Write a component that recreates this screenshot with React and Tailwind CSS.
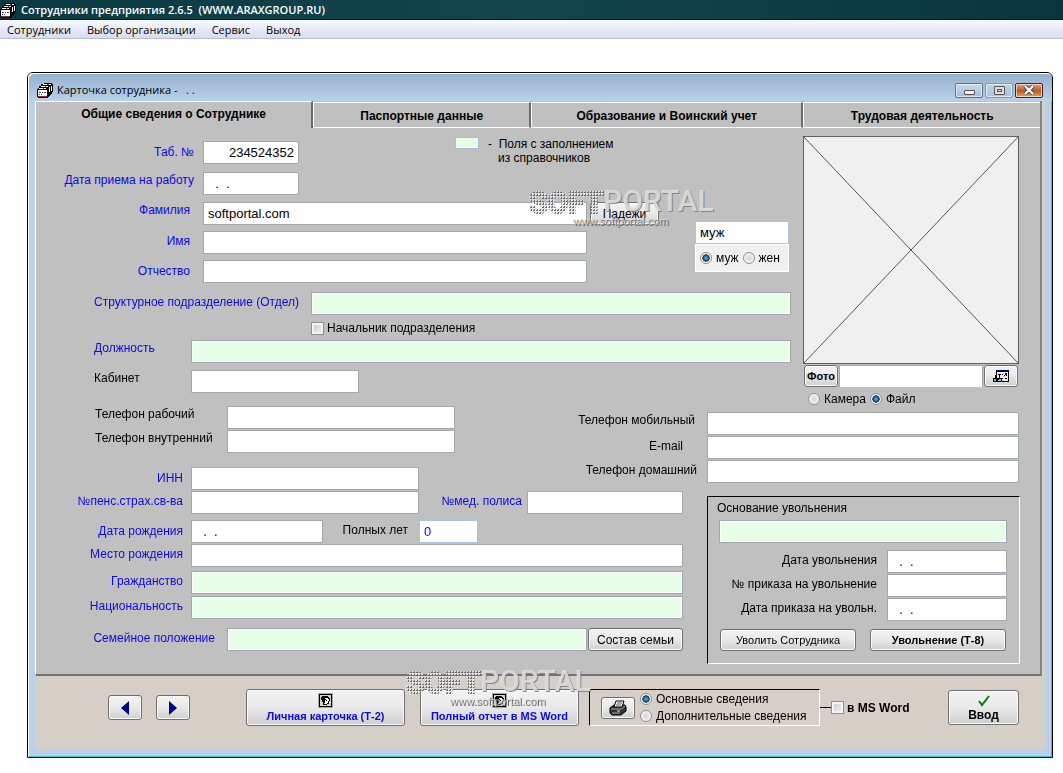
import React from "react";

const inputBase =
  "h-[23px] min-w-0 border px-1 text-[13px] outline-none";
const plain = inputBase + " border-[#a5a7af] bg-white text-black";
const lookup = inputBase + " border-[#a5a7af] bg-[#e6ffe6] text-black shadow-[inset_0_0_0_1px_white]";
const blueEdge = inputBase + " border-[#a9c3e3] bg-white";

const labelBase = "shrink-0 whitespace-nowrap text-[12px]";
const blue = "text-[#0a0ae6]";

const buttonBase =
  "shrink-0 whitespace-nowrap rounded-[3px] border border-[#707070] bg-linear-to-b from-[#f3f3f3] from-0% via-[#e9e9e9] via-50% to-[#cfcfcf] text-black shadow-[inset_0_0_0_1px_#fafafa]";

const radioClass =
  "m-0 size-3 shrink-0 appearance-none rounded-full border border-[#8e8f8f] bg-[radial-gradient(circle,#d4d4d4_0%,#f4f4f4_70%)] checked:bg-[radial-gradient(circle,#5fc0ee_0%,#14507f_38%,#0e3350_48%,#f4f4f4_56%)]";

const checkClass =
  "m-0 size-[13px] shrink-0 appearance-none border border-[#8e8f8f] bg-linear-to-br from-[#c4c8cc] to-[#f6f6f6] shadow-[inset_0_0_0_2px_#f4f4f4] checked:bg-[#14507f]";

function Label({ id, className, children }) {
  return (
    <label htmlFor={id} className={`${labelBase} ${className}`}>
      {children}
    </label>
  );
}

function Field({ id, label, labelClass, inputClass, value, className = "", autoFocus }) {
  return (
    <div className={`flex items-start ${className}`}>
      <Label id={id} className={labelClass}>
        {label}
      </Label>
      <input id={id} defaultValue={value} className={inputClass} autoFocus={autoFocus} />
    </div>
  );
}

function CardsIcon() {
  return (
    <svg viewBox="0 0 16 15" className="h-[15px] w-4 shrink-0" shapeRendering="crispEdges" aria-hidden="true">
      <path d="M7 0h8v1h1v8h-1v2h-1v1h-1v1h-1v1h-1v1H1v-1H0V6h1V5h1V3h2V1h3z" fill="#000" />
      <path d="M6 1h8v1H6zM4 3h7v1H4zM2 5h7v1H2zM1 7h9v6H1z" fill="#fff" />
      <path d="M14 3h1v5h-1zM12 4h1v5h-1zM11 8h0v4h0z" fill="#fff" />
      <path d="M2 9h2v1H2zM5 9h1v1H5zM7 9h2v1H7zM2 11h1v1H2zM4 11h1v1H4z" fill="#444" />
      <path d="M1 13h9v1H1zM10 1h2v1h-2zM8 3h1v1H8zM6 5h1v1H6z" fill="#9b2b22" />
    </svg>
  );
}

function ProfileIcon() {
  return (
    <svg viewBox="0 0 15 15" className="size-[15px]" shapeRendering="crispEdges" aria-hidden="true">
      <path d="M0 0h15v15H0z" fill="#a8a8a8" />
      <path d="M1 1h13v13H1z" fill="#000" />
      <path d="M2 2h11v11H2z" fill="#d4d4d4" />
      <path d="M4 3h6v1h1v2H9v1H7v3H6v2H5V9H4V7H3V4h1z" fill="#000" />
      <path d="M11 5h1v3h-1v3H9v1H6v-1h3v-1h1V8h1z" fill="#000" />
      <path d="M7 5h3v1h1v2h-1v2H8v1H7V7h1z" fill="#fff" />
      <path d="M8 7h1v1H8z" fill="#000" />
    </svg>
  );
}

function PrinterIcon() {
  return (
    <svg viewBox="0 0 18 16" className="h-4 w-[18px]" aria-hidden="true">
      <path d="M1 8 5 5h11l1 2v4l-5 4H3l-2-2z" fill="#333" stroke="#000" />
      <path d="m7 1 8 0-2 6H5z" fill="#fff" stroke="#000" />
      <path d="M8 3h5M7 5h5" stroke="#555" />
      <path d="M2 9h10M12 9l4-3M3 13h8" stroke="#aaa" />
      <path d="M8 11h3" stroke="#ddd" />
    </svg>
  );
}

function BrowseIcon() {
  return (
    <svg viewBox="0 0 16 12" className="h-3 w-4" shapeRendering="crispEdges" aria-hidden="true">
      <path d="M3 0h13v12H3z" fill="#000" />
      <path d="M3 0h13v2H3z" fill="#00007b" />
      <path d="M4 2h11v9H4z" fill="#e8e8e8" />
      <path d="M5 4h3v1H5zM9 4h1v1H9zM12 3h2v3h-1V5h-1v1h-1V5h1zM9 8h1v1H9zM12 8h2v1h-2z" fill="#000" />
      <path d="M2 5h1v1h1v2h2V5h1v3h2v4H6v-2H5v2H0V8h2z" fill="#000" />
      <path d="M1 9h2v2H1zM6 9h2v2H6z" fill="#39d6e0" />
    </svg>
  );
}

function Watermark({ className }) {
  const id = React.useId();
  return (
    <svg viewBox="0 0 190 42" className={`pointer-events-none absolute h-[42px] w-[190px] ${className}`} aria-hidden="true">
      <defs>
        <pattern id={id} width="3" height="3" patternUnits="userSpaceOnUse">
          <rect width="2" height="2" fill="#e4e4e4" />
          <path d="M2 1h1v2H1V2h1z" fill="#6a6a6a" />
        </pattern>
      </defs>
      <g fontFamily="Roboto, sans-serif">
        <text x="0" y="26" fontSize="30" fontWeight="700" fill={`url(#${id})`} stroke={`url(#${id})`} strokeWidth="2">SOFT</text>
        <text x="75" y="25" fontSize="30" fontWeight="500" fill="#777" opacity=".8">PORTAL</text>
        <text x="74" y="24" fontSize="30" fontWeight="500" fill="#dedede" opacity=".9">PORTAL</text>
      </g>
      <g fontFamily="Liberation Sans, sans-serif" fontSize="11">
        <text x="45" y="39" fill="#666">www.softportal.com</text>
        <text x="44" y="38" fill="#d8d8d8" opacity=".7">www.softportal.com</text>
      </g>
    </svg>
  );
}

function WindowButton({ label, className, children }) {
  return (
    <button
      type="button"
      aria-label={label}
      className={`flex h-[15px] w-7 items-center justify-center rounded-[2px] border shadow-[inset_0_0_0_1px_rgba(255,255,255,0.6)] ${className}`}
    >
      {children}
    </button>
  );
}

function Radio({ name, label, checked, className = "" }) {
  return (
    <label className={`flex items-center whitespace-nowrap text-[12px] ${className}`}>
      <input type="radio" name={name} defaultChecked={checked} className={radioClass} />
      {label}
    </label>
  );
}

function TopForm() {
  return (
    <div className="flex min-w-0 flex-1 flex-col pt-[13px]">
      <div className="flex items-start">
        <div className="flex flex-col gap-2">
          <Field id="tab" label="Таб. №" value="234524352" labelClass={`w-[167px] pr-[9px] text-right leading-[22px] ${blue}`} inputClass={`${plain} w-24 text-right`} />
          <Field id="hired" label="Дата приема на работу" value="  .  ." labelClass={`w-[167px] pr-[9px] text-right leading-4 ${blue}`} inputClass={`${plain} w-24`} />
        </div>
        <div className="-mt-1 ml-[156px] flex items-start">
          <span className="h-3 w-6 border border-[#a9bdd6] bg-[#e6ffe6]" />
          <p className="ml-[9px] whitespace-pre text-[12px] leading-[14px]">
            {"-  Поля с заполнением\n   из справочников"}
          </p>
        </div>
      </div>

      <div className="mt-[7px] flex items-start">
        <div className="flex flex-1 flex-col gap-1.5">
          <Field id="surname" label="Фамилия" value="softportal.com" labelClass={`w-[167px] pr-[13px] text-right leading-4 ${blue}`} inputClass={`${plain} flex-1`} />
          <Field id="name" label="Имя" autoFocus labelClass={`w-[167px] pr-[13px] text-right leading-5 ${blue}`} inputClass={`${plain} flex-1`} />
          <Field id="patronymic" label="Отчество" labelClass={`w-[167px] pr-[13px] text-right leading-[22px] ${blue}`} inputClass={`${plain} flex-1`} />
        </div>
        <button type="button" className={`${buttonBase} ml-[3px] h-[23px] w-[69px] text-[12px]`}>Падежи</button>
        <div className="mr-[2px] ml-9 mt-[18px] w-[94px]">
          <input aria-label="Пол" defaultValue="муж" className={`${blueEdge} w-full text-black`} />
          <div className="flex h-7 items-center gap-1 border border-white bg-[#f0f0f0] px-1">
            <Radio name="sex" label="муж" checked className="gap-1" />
            <Radio name="sex" label="жен" className="gap-1" />
          </div>
        </div>
      </div>

      <Field id="dept" label="Структурное подразделение (Отдел)" className="mt-[9px]" labelClass={`w-[275px] pl-[58px] leading-5 ${blue}`} inputClass={`${lookup} flex-1`} />
      <label className="ml-[275px] mt-1.5 flex items-center gap-[3px] text-[12px] leading-[14px]">
        <input type="checkbox" className={checkClass} />
        Начальник подразделения
      </label>
      <Field id="post" label="Должность" className="mt-[5px]" labelClass={`w-[155px] pl-[58px] leading-4 ${blue}`} inputClass={`${lookup} flex-1`} />
      <Field id="room" label="Кабинет" className="mt-[7px]" labelClass="w-[155px] pl-[58px] leading-4" inputClass={`${plain} w-[168px]`} />
    </div>
  );
}

function PhotoPanel() {
  return (
    <div className="flex w-[216px] shrink-0 flex-col pt-2">
      <svg viewBox="0 0 216 228" className="h-[228px] w-full" role="img" aria-label="Фото сотрудника">
        <rect x=".5" y=".5" width="215" height="227" fill="#f0f0f0" stroke="#606060" />
        <path d="M0 0 216 228M216 0 0 228" stroke="#555" strokeWidth="1" />
      </svg>
      <div className="mt-px flex h-[22px] px-px">
        <button type="button" className={`${buttonBase} w-[34px] text-[11px] font-bold`}>Фото</button>
        <input aria-label="Путь к фото" className="mx-px min-w-0 flex-1 border-x border-t border-[#a5a7af] bg-white px-1 text-[13px] outline-none" />
        <button type="button" aria-label="Обзор" className={`${buttonBase} flex w-[34px] items-center justify-center`}>
          <BrowseIcon />
        </button>
      </div>
      <div className="mt-[5px] flex h-[13px] items-center gap-1 pl-[5px]">
        <Radio name="source" label="Камера" className="gap-1" />
        <Radio name="source" label="Файл" checked className="gap-1" />
      </div>
    </div>
  );
}

function Dismissal() {
  const label = "flex-1 pr-[10px] text-right leading-5";
  return (
    <section className="-mr-px mt-[5px] w-[313px] shrink-0 border border-t-black border-l-black border-r-white border-b-white pt-[3px] pr-3 pb-3 pl-[11px]">
      <label htmlFor="reason" className="-ml-0.5 block text-[12px] leading-4">Основание увольнения</label>
      <input id="reason" className={`${lookup} mt-1 block w-full`} />
      <div className="mt-[7px] flex flex-col gap-px">
        <Field id="outdate" label="Дата увольнения" value="  .  ." labelClass={label} inputClass={`${plain} w-[120px]`} />
        <Field id="order" label="№ приказа на увольнение" labelClass={label} inputClass={`${plain} w-[120px]`} />
        <Field id="orderdate" label="Дата приказа на увольн." value="  .  ." labelClass={label} inputClass={`${plain} w-[120px]`} />
      </div>
      <div className="mt-2 flex justify-between px-px">
        <button type="button" className={`${buttonBase} h-[22px] w-[136px] text-[11px]`}>Уволить Сотрудника</button>
        <button type="button" className={`${buttonBase} h-[22px] w-[136px] text-[11px] font-bold`}>Увольнение (Т-8)</button>
      </div>
    </section>
  );
}

function LowerForm() {
  const label = `w-[155px] pr-2 text-right leading-5 ${blue}`;
  const lowLabel = `w-[155px] pr-2 text-right leading-[22px] ${blue}`;
  const phone = "w-[191px] pl-[59px] leading-4";
  return (
    <>
      <div className="mt-px flex items-start justify-between">
        <div className="flex flex-col">
          <Field id="workphone" label="Телефон рабочий" labelClass={phone} inputClass={`${plain} w-[228px]`} />
          <Field id="intphone" label="Телефон внутренний" className="mt-px" labelClass={phone} inputClass={`${plain} w-[228px]`} />
          <Field id="inn" label="ИНН" className="mt-[14px]" labelClass={lowLabel} inputClass={`${plain} w-[228px]`} />
        </div>
        <div className="mt-1.5 flex flex-col items-end gap-px">
          <Field id="mobile" label="Телефон мобильный" labelClass="pr-3 leading-4" inputClass={`${plain} w-[312px]`} />
          <Field id="email" label="E-mail" labelClass="pr-6 leading-5" inputClass={`${plain} w-[312px]`} />
          <Field id="home" label="Телефон домашний" labelClass="pr-[10px] leading-5" inputClass={`${plain} w-[312px]`} />
        </div>
      </div>
      <div className="mt-px flex items-start">
        <div className="mr-6 flex min-w-0 flex-1 flex-col">
          <div className="flex">
            <Field id="pension" label="№пенс.страх.св-ва" labelClass={label} inputClass={`${plain} w-[228px]`} />
            <Field id="policy" label="№мед. полиса" className="min-w-0 flex-1" labelClass={`w-[108px] pr-[5px] text-right leading-5 ${blue}`} inputClass={`${plain} flex-1`} />
          </div>
          <div className="mt-1.5 flex">
            <Field id="birth" label="Дата рождения" value="  .  ." labelClass={lowLabel} inputClass={`${plain} w-[132px]`} />
            <Field id="age" label="Полных лет" value="0" labelClass="w-24 pr-[11px] text-right leading-5" inputClass={`${blueEdge} w-[59px] text-[#0a0ae6]`} />
          </div>
          <Field id="place" label="Место рождения" className="mt-px" labelClass={label} inputClass={`${plain} flex-1`} />
          <Field id="citizen" label="Гражданство" className="mt-1" labelClass={label} inputClass={`${lookup} flex-1`} />
          <Field id="nation" label="Национальность" className="mt-0.5" labelClass={label} inputClass={`${lookup} flex-1`} />
          <div className="mt-[9px] flex items-start">
            <Field id="family" label="Семейное положение" className="flex-1" labelClass={`w-[191px] pr-3 text-right leading-5 ${blue}`} inputClass={`${lookup} flex-1`} />
            <button type="button" className={`${buttonBase} ml-px h-[23px] w-[95px] text-[12px]`}>Состав семьи</button>
          </div>
        </div>
        <Dismissal />
      </div>
    </>
  );
}

function BottomBar() {
  return (
    <footer className="flex h-[73px] items-start pt-[13px] pr-[26px] pl-[73px]">
      <div className="flex h-[37px] flex-1 items-center">
        <button type="button" aria-label="Назад" className={`${buttonBase} flex h-[25px] w-[34px] items-center justify-center`}>
          <svg viewBox="0 0 8 14" className="h-[14px] w-2"><path d="M8 0v14L0 7z" fill="#000084" /></svg>
        </button>
        <button type="button" aria-label="Вперёд" className={`${buttonBase} ml-[14px] flex h-[25px] w-[34px] items-center justify-center`}>
          <svg viewBox="0 0 8 14" className="h-[14px] w-2"><path d="M0 0v14l8-7z" fill="#000084" /></svg>
        </button>
        <button type="button" className={`${buttonBase} ml-14 flex h-full w-[159px] flex-col items-center pt-[3px] text-[11px] font-bold leading-4`}>
          <ProfileIcon />
          <span className={blue}>Личная карточка (Т-2)</span>
        </button>
        <button type="button" className={`${buttonBase} ml-[15px] flex h-full w-[159px] flex-col items-center pt-[3px] text-[11px] font-bold leading-4`}>
          <ProfileIcon />
          <span className={blue}>Полный отчет в MS Word</span>
        </button>
        <div className="ml-[10px] flex h-full w-[231px] shrink-0 items-center border border-t-black border-l-black border-r-white border-b-white pl-[11px]">
          <button type="button" aria-label="Печать" className={`${buttonBase} flex h-[22px] w-[34px] items-center justify-center`}>
            <PrinterIcon />
          </button>
          <div className="ml-[5px] flex flex-col">
            <Radio name="details" label="Основные сведения" checked className="gap-1 leading-[17px]" />
            <Radio name="details" label="Дополнительные сведения" className="gap-1 leading-[17px]" />
          </div>
        </div>
        <span className="h-px w-[11px] bg-black" />
        <label className="flex items-center gap-[3px] whitespace-nowrap text-[12px] font-bold">
          <input type="checkbox" className={checkClass} />
          в MS Word
        </label>
        <button type="button" className={`${buttonBase} ml-auto flex h-[35px] w-[71px] flex-col items-center pt-1 text-[12px] font-bold leading-4`}>
          <svg viewBox="0 0 12 12" className="h-3 w-3"><path d="m1 6 3 4 7-9" fill="none" stroke="#008000" strokeWidth="2" /></svg>
          Ввод
        </button>
      </div>
    </footer>
  );
}

const idleTab = "mt-px border-t border-l border-b border-white pt-px";

export default function App() {
  return (
    <div className="relative min-h-screen bg-white pb-[15px] font-['Liberation_Sans',Arial,sans-serif] text-black">
      <header className="flex h-[19px] items-center gap-[5px] bg-linear-to-r from-[#0b3a42] via-[#14454c] to-[#0a343b] pt-px font-['Open_Sans',sans-serif] text-[11px] text-white shadow-[0_1px_0_#10181c]">
        <CardsIcon />
        <h1 className="whitespace-pre font-semibold">{"Сотрудники предприятия 2.6.5  (WWW.ARAXGROUP.RU)"}</h1>
      </header>
      <nav className="mt-px flex h-[19px] items-center gap-4 border-b border-[#b9bdd2] bg-linear-to-b from-[#f8f9fd] to-[#d8dcee] pt-0.5 pl-[7px] font-['Open_Sans',sans-serif] text-[11px]">
        <a href="#staff">Сотрудники</a>
        <a href="#org">Выбор организации</a>
        <a href="#service">Сервис</a>
        <a href="#exit">Выход</a>
      </nav>

      <main className="mt-[33px] mr-[10px] ml-[27px] rounded-t-[6px] border border-black bg-[#b9d1ea] shadow-[inset_1px_1px_0_white,inset_-1px_-1px_0_#2cc8dc]">
        <div className="flex h-7 items-center rounded-t-[5px] bg-linear-to-b from-[#95b0cc] to-[#b9d1ea] pt-1.5 pr-[9px] pl-[9px] shadow-[inset_1px_1px_0_white]">
          <CardsIcon />
          <h2 className="ml-1 flex-1 whitespace-pre font-['Open_Sans',sans-serif] text-[11px]">{"Карточка сотрудника -   . ."}</h2>
          <div className="flex gap-0.5">
            <WindowButton label="Свернуть" className="border-[#5f7183] bg-linear-to-b from-[#c9dbed] to-[#a3bdd8]">
              <span className="mt-1 h-[5px] w-[11px] rounded-[1px] border border-[#555] bg-[#f4f1e8]" />
            </WindowButton>
            <WindowButton label="Развернуть" className="border-[#8097ad] bg-linear-to-b from-[#bfd3e8] to-[#a9c3de]">
              <span className="flex h-[9px] w-[11px] items-center justify-center rounded-[1px] border border-[#555] bg-[#e0e0e0]">
                <span className="h-[3px] w-[5px] border border-[#555]" />
              </span>
            </WindowButton>
            <WindowButton label="Закрыть" className="border-[#5a1a20] bg-linear-to-b from-[#e0a96c] via-[#b65a2c] to-[#dca062]">
              <svg viewBox="0 0 12 10" className="h-[10px] w-3">
                <path d="m2 1 8 8M10 1 2 9" stroke="#444" strokeWidth="4" />
                <path d="m2 1 8 8M10 1 2 9" stroke="#fff" strokeWidth="2.4" />
              </svg>
            </WindowButton>
          </div>
        </div>

        <div className="mr-[7px] mb-2 ml-[7px] bg-[#d5cfc8]">
          <div className="mr-[3px] border-r-2 border-b-2 border-l border-r-[#858585] border-b-[#737373] border-l-white bg-[#c0c0c0]">
            <div className="flex h-[27px] text-[12px] font-bold" role="tablist">
              <button type="button" role="tab" aria-selected="true" className="flex-[278] border-t border-r-2 border-t-white border-r-[#6b6b6b] pb-[3px]">
                Общие сведения о Сотруднике
              </button>
              <button type="button" role="tab" aria-selected="false" className={`flex-[217] border-r-2 border-r-[#6b6b6b] ${idleTab}`}>
                Паспортные данные
              </button>
              <button type="button" role="tab" aria-selected="false" className={`flex-[272] border-r-2 border-r-[#6b6b6b] ${idleTab}`}>
                Образование и Воинский учет
              </button>
              <button type="button" role="tab" aria-selected="false" className={`flex-[238] ${idleTab}`}>
                Трудовая деятельность
              </button>
            </div>
            <form className="flex flex-col pr-[21px] pb-[10px]">
              <div className="flex items-start gap-3">
                <TopForm />
                <PhotoPanel />
              </div>
              <LowerForm />
            </form>
          </div>
          <BottomBar />
        </div>
      </main>

      <Watermark className="top-[187px] left-[529px]" />
      <Watermark className="top-[667px] left-[406px]" />
    </div>
  );
}
